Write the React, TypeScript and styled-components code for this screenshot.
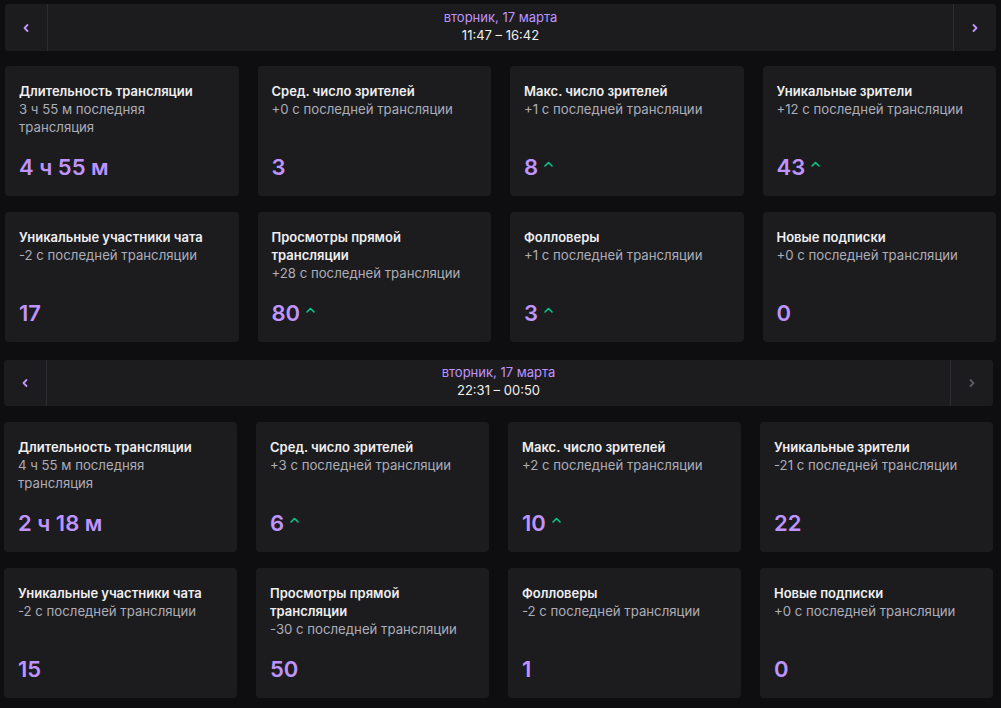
import styled, { createGlobalStyle } from 'styled-components'

const GlobalStyle = createGlobalStyle`
  html, body {
    margin: 0;
    padding: 0;
    background: #0e0e10;
  }
  body {
    font-family: Inter, "Noto Sans", "DejaVu Sans", sans-serif;
    color: #efeff1;
  }
`

const Page = styled.div`
  width: 1001px;
  height: 708px;
  overflow: hidden;
  background: #0e0e10;
  display: flex;
  flex-direction: column;
  gap: 18px;
  padding-top: 4px;
  box-sizing: border-box;
`

const Section = styled.section<{ $left: number; $width: number; $gap: number }>`
  margin-left: ${(p) => p.$left}px;
  width: ${(p) => p.$width}px;
  display: flex;
  flex-direction: column;
  gap: ${(p) => p.$gap}px;
`

const DateBar = styled.div<{ $height: number }>`
  height: ${(p) => p.$height}px;
  display: flex;
  background: #1c1c1f;
  border-radius: 3px;
  overflow: hidden;
`

const NavButton = styled.div<{ $side: 'left' | 'right'; $disabled?: boolean }>`
  width: 42px;
  display: flex;
  align-items: center;
  justify-content: center;
  color: ${(p) => (p.$disabled ? '#5a5a63' : '#bf94ff')};
  ${(p) => (p.$side === 'left' ? 'border-right' : 'border-left')}: 1px solid #2c2c31;
`

const DateCenter = styled.div`
  flex: 1;
  display: flex;
  flex-direction: column;
  align-items: center;
  justify-content: center;
  padding-bottom: 4px;
  font-size: 13px;
  line-height: 18px;
`

const DateLabel = styled.div`
  color: #bf94ff;
`

const TimeLabel = styled.div`
  color: #efeff1;
`

const Grid = styled.div<{ $rowGap: number }>`
  display: grid;
  grid-template-columns: repeat(4, 1fr);
  column-gap: 19px;
  row-gap: ${(p) => p.$rowGap}px;
`

const Card = styled.div`
  height: 130px;
  box-sizing: border-box;
  background: #1c1c1f;
  border-radius: 4px;
  padding: 16px 18px 15px 14px;
  display: flex;
  flex-direction: column;
`

const CardTitle = styled.div`
  font-size: 13px;
  line-height: 18px;
  font-weight: 600;
  color: #efeff1;
`

const CardDelta = styled.div`
  font-size: 13.2px;
  line-height: 18px;
  color: #adadb8;
`

const ValueRow = styled.div`
  margin-top: auto;
  display: flex;
  align-items: center;
  gap: 6px;
`

const Value = styled.div`
  font-size: 22px;
  line-height: 28px;
  font-weight: 600;
  color: #bf94ff;
`

const Up = styled.svg`
  color: #00c98a;
  margin-top: -6px;
`

function Chevron({ dir }: { dir: 'left' | 'right' }) {
  return (
    <svg width="8" height="10" viewBox="0 0 8 10" fill="none">
      <path
        d={dir === 'left' ? 'M5.5 2 L2.5 5 L5.5 8' : 'M2.5 2 L5.5 5 L2.5 8'}
        stroke="currentColor"
        strokeWidth="1.8"
        strokeLinecap="round"
        strokeLinejoin="round"
      />
    </svg>
  )
}

interface Stat {
  title: string
  delta: string
  value: string
  up?: boolean
}

interface Stream {
  date: string
  time: string
  nextDisabled?: boolean
  stats: Stat[]
}

const streams: Stream[] = [
  {
    date: 'вторник, 17 марта',
    time: '11:47 – 16:42',
    stats: [
      { title: 'Длительность трансляции', delta: '3 ч 55 м последняя трансляция', value: '4 ч 55 м' },
      { title: 'Сред. число зрителей', delta: '+0 с последней трансляции', value: '3' },
      { title: 'Макс. число зрителей', delta: '+1 с последней трансляции', value: '8', up: true },
      { title: 'Уникальные зрители', delta: '+12 с последней трансляции', value: '43', up: true },
      { title: 'Уникальные участники чата', delta: '-2 с последней трансляции', value: '17' },
      { title: 'Просмотры прямой трансляции', delta: '+28 с последней трансляции', value: '80', up: true },
      { title: 'Фолловеры', delta: '+1 с последней трансляции', value: '3', up: true },
      { title: 'Новые подписки', delta: '+0 с последней трансляции', value: '0' },
    ],
  },
  {
    date: 'вторник, 17 марта',
    time: '22:31 – 00:50',
    nextDisabled: true,
    stats: [
      { title: 'Длительность трансляции', delta: '4 ч 55 м последняя трансляция', value: '2 ч 18 м' },
      { title: 'Сред. число зрителей', delta: '+3 с последней трансляции', value: '6', up: true },
      { title: 'Макс. число зрителей', delta: '+2 с последней трансляции', value: '10', up: true },
      { title: 'Уникальные зрители', delta: '-21 с последней трансляции', value: '22' },
      { title: 'Уникальные участники чата', delta: '-2 с последней трансляции', value: '15' },
      { title: 'Просмотры прямой трансляции', delta: '-30 с последней трансляции', value: '50' },
      { title: 'Фолловеры', delta: '-2 с последней трансляции', value: '1' },
      { title: 'Новые подписки', delta: '+0 с последней трансляции', value: '0' },
    ],
  },
]

const layouts = [
  { left: 5, width: 991, gap: 15, bar: 47, rowGap: 16 },
  { left: 4, width: 989, gap: 16, bar: 46, rowGap: 16 },
]

export default function App() {
  return (
    <>
      <GlobalStyle />
      <Page>
        {streams.map((s, i) => {
          const l = layouts[i]
          return (
            <Section key={i} $left={l.left} $width={l.width} $gap={l.gap}>
              <DateBar $height={l.bar}>
                <NavButton $side="left">
                  <Chevron dir="left" />
                </NavButton>
                <DateCenter>
                  <DateLabel>{s.date}</DateLabel>
                  <TimeLabel>{s.time}</TimeLabel>
                </DateCenter>
                <NavButton $side="right" $disabled={s.nextDisabled}>
                  <Chevron dir="right" />
                </NavButton>
              </DateBar>
              <Grid $rowGap={l.rowGap}>
                {s.stats.map((st) => (
                  <Card key={st.title}>
                    <CardTitle>{st.title}</CardTitle>
                    <CardDelta>{st.delta}</CardDelta>
                    <ValueRow>
                      <Value>{st.value}</Value>
                      {st.up && (
                        <Up width="9" height="6" viewBox="0 0 9 6" fill="none">
                          <path d="M1 5 L4.5 1.5 L8 5" stroke="currentColor" strokeWidth="1.6" strokeLinecap="round" strokeLinejoin="round" />
                        </Up>
                      )}
                    </ValueRow>
                  </Card>
                ))}
              </Grid>
            </Section>
          )
        })}
      </Page>
    </>
  )
}
